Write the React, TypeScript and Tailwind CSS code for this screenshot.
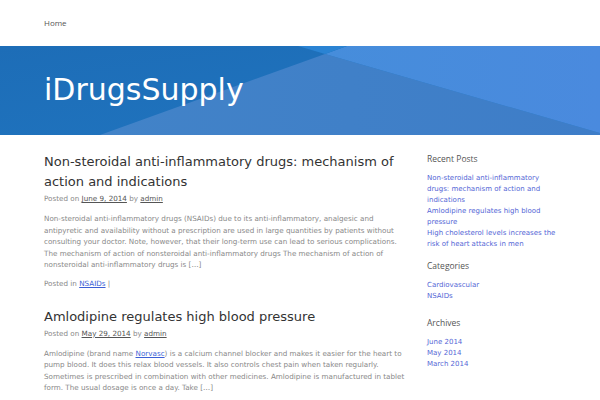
import React from "react";

const dv = { fontFamily: '"DejaVu Sans", sans-serif' };
const os = { fontFamily: '"Open Sans", "DejaVu Sans", sans-serif' };

function HeaderBg() {
  return (
    <svg className="absolute inset-0 h-full w-full" viewBox="0 0 600 89" preserveAspectRatio="none">
      <defs>
        <linearGradient id="gl" x1="0" y1="0" x2="1" y2="1">
          <stop offset="0" stopColor="#1d6db7" />
          <stop offset="1" stopColor="#2075c0" />
        </linearGradient>
        <linearGradient id="gm" x1="0" y1="0" x2="1" y2="0">
          <stop offset="0" stopColor="#4283c8" />
          <stop offset="1" stopColor="#3e7dc8" />
        </linearGradient>
        <linearGradient id="gt" x1="0" y1="0" x2="1" y2="0">
          <stop offset="0" stopColor="#468ddb" />
          <stop offset="1" stopColor="#4a8ade" />
        </linearGradient>
      </defs>
      <rect x="0" y="0" width="600" height="89" fill="url(#gl)" />
      <polygon points="325,8 600,87 600,89 100,89" fill="url(#gm)" />
      <polygon points="347,0 600,0 600,87 325,8" fill="url(#gt)" />
      <polygon points="298,0 347,0 325,8" fill="#2a83d3" />
    </svg>
  );
}

function Meta({ date }: { date: string }) {
  return (
    <div className="text-[7.2px] leading-[11px] text-[#888]" style={dv}>
      Posted on <span className="text-[#555] underline">{date}</span> by{" "}
      <span className="text-[#555] underline">admin</span>
    </div>
  );
}

export default function App() {
  return (
    <div className="w-[600px] h-[400px] overflow-hidden bg-white">
      <nav className="h-[46px] px-[44px] flex items-center">
        <span className="text-[8px] text-[#555]" style={os}>Home</span>
      </nav>
      <header className="relative h-[89px] flex items-center px-[44px]">
        <HeaderBg />
        <h1 className="relative text-[30px] text-white leading-none pb-[1px]" style={dv}>
          iDrugsSupply
        </h1>
      </header>
      <div className="flex px-[44px] pt-[17px] gap-[17px]">
        <main className="w-[366px] shrink-0">
          <article>
            <h2 className="text-[13px] leading-[20px] text-[#333]" style={dv}>
              Non-steroidal anti-inflammatory drugs: mechanism of action and indications
            </h2>
            <div className="mt-[1px]"><Meta date="June 9, 2014" /></div>
            <p className="mt-[9px] text-[7.2px] leading-[11.5px] text-[#888]" style={dv}>
              Non-steroidal anti-inflammatory drugs (NSAIDs) due to its anti-inflammatory, analgesic and antipyretic and availability without a prescription are used in large quantities by patients without consulting your doctor. Note, however, that their long-term use can lead to serious complications. The mechanism of action of nonsteroidal anti-inflammatory drugs The mechanism of action of nonsteroidal anti-inflammatory drugs is […]
            </p>
            <div className="mt-[7px] text-[7.2px] leading-[11px] text-[#888]" style={dv}>
              Posted in <span className="text-[#3b5fd6] underline">NSAIDs</span> |
            </div>
          </article>
          <article className="mt-[18px]">
            <h2 className="text-[13px] leading-[20px] text-[#333]" style={dv}>
              Amlodipine regulates high blood pressure
            </h2>
            <div className="mt-[1px]"><Meta date="May 29, 2014" /></div>
            <p className="mt-[9px] text-[7.2px] leading-[11.5px] text-[#888]" style={dv}>
              Amlodipine (brand name <span className="text-[#3b5fd6] underline">Norvasc</span>) is a calcium channel blocker and makes it easier for the heart to pump blood. It does this relax blood vessels. It also controls chest pain when taken regularly. Sometimes is prescribed in combination with other medicines. Amlodipine is manufactured in tablet form. The usual dosage is once a day. Take […]
            </p>
          </article>
        </main>
        <aside className="w-[135px] shrink-0 pt-[1px]">
          <section>
            <h3 className="text-[8.5px] leading-[12px] text-[#555]" style={os}>Recent Posts</h3>
            <ul className="mt-[8px] text-[7px] leading-[11px] text-[#5466d6]" style={dv}>
              <li>Non-steroidal anti-inflammatory drugs: mechanism of action and indications</li>
              <li>Amlodipine regulates high blood pressure</li>
              <li>High cholesterol levels increases the risk of heart attacks in men</li>
            </ul>
          </section>
          <section className="mt-[10px]">
            <h3 className="text-[8.5px] leading-[12px] text-[#555]" style={os}>Categories</h3>
            <ul className="mt-[8px] text-[7px] leading-[11px] text-[#5466d6]" style={dv}>
              <li>Cardiovascular</li>
              <li>NSAIDs</li>
            </ul>
          </section>
          <section className="mt-[15px]">
            <h3 className="text-[8.5px] leading-[12px] text-[#555]" style={os}>Archives</h3>
            <ul className="mt-[8px] text-[7px] leading-[11px] text-[#5466d6]" style={dv}>
              <li>June 2014</li>
              <li>May 2014</li>
              <li>March 2014</li>
            </ul>
          </section>
        </aside>
      </div>
    </div>
  );
}
